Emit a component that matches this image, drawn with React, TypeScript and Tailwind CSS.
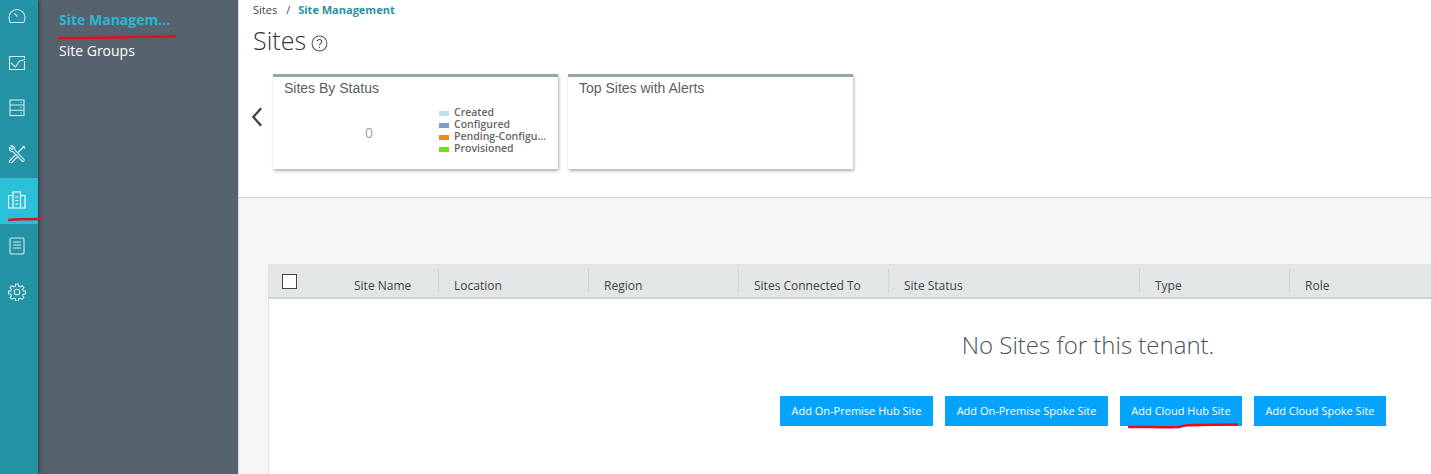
const railIcons = [
  // gauge
  <>
    <path d="M2.200 15.500C1.400 14 1 12.300 1 10.500a8 8 0 0 1 16 0c0 1.800-.4 3.500-1.200 5z" />
    <path d="M9.500 9.500 6.500 6.500" />
  </>,
  // chart in a box
  <>
    <path d="M16.500 5.500V3.500h-15v13h15V8" />
    <path d="M3 10l4.500 4 4-6 5.500-1.500" />
  </>,
  // server rack
  <>
    <rect x="2" y="1" width="14" height="15.500" />
    <path d="M2 6h14M2 11.200h14M12.500 3.500h1M12.500 8.600h1M12.500 13.800h1" />
  </>,
  // tools
  <>
    <path d="M3 .8 5.200 3.200 4 4.500 1.500 2.500C1 5 2.800 7 5 6.500l9 9.500c1.100 1.100 3-.4 1.900-1.700L6.800 4.800C7.300 2.600 5.500.4 3 .8z" />
    <path d="M16.500 1 9.800 7.500M7.500 10 1.800 15.500a1.400 1.400 0 0 0 2.100 2l5.300-5.500" />
    <path d="M14.500.8l2.700 2.700" />
  </>,
  // buildings
  <>
    <path d="M.5 4.500h4.500v12.500H.5zM5 17V1h7.500v16zM12.500 4.500H17V17h-4.500z" />
    <path d="M7.300 6h3M7.300 9.500h3M7.300 13h3" />
  </>,
  // document
  <>
    <rect x="2" y="1" width="14" height="16" rx="1.500" />
    <path d="M5 5h8M5 8h8M5 11h8" />
  </>,
  // gear
  <>
    <circle cx="9" cy="9" r="2.800" />
    <path d="M7.700 1h2.600l.4 2.300 1.400.6 1.900-1.300 1.900 1.900-1.300 1.900.6 1.400 2.300.4v2.600l-2.300.4-.6 1.400 1.300 1.900-1.900 1.900-1.900-1.300-1.400.6-.4 2.300H7.700l-.4-2.300-1.400-.6-1.900 1.300L2.100 14.600l1.300-1.900-.6-1.400-2.300-.4V8.300l2.300-.4.6-1.400-1.300-1.900L4 2.700l1.900 1.300 1.400-.6z" />
  </>,
];

const columns = [
  { label: "Site Name", width: "w-[170px]", pad: "pl-[85px]" },
  { label: "Location", width: "w-[150px]", pad: "pl-[15px]" },
  { label: "Region", width: "w-[150px]", pad: "pl-[15px]" },
  { label: "Sites Connected To", width: "w-[150px]", pad: "pl-[15px]" },
  { label: "Site Status", width: "w-[251px]", pad: "pl-[15px]" },
  { label: "Type", width: "w-[150px]", pad: "pl-[15px]" },
  { label: "Role", width: "flex-1", pad: "pl-[15px]" },
];

const legend = [
  { label: "Created", color: "bg-[#c0e0e4]" },
  { label: "Configured", color: "bg-[#749fd2]" },
  { label: "Pending-Configu...", color: "bg-[#f28c0c]" },
  { label: "Provisioned", color: "bg-[#6fe31d]" },
];

const buttons = [
  { label: "Add On-Premise Hub Site", width: "w-[153px]" },
  { label: "Add On-Premise Spoke Site", width: "w-[163px]" },
  { label: "Add Cloud Hub Site", width: "w-[122px]" },
  { label: "Add Cloud Spoke Site", width: "w-[132px]" },
];

function Scribble({ className, d, w, h }: { className: string; d: string; w: number; h: number }) {
  return (
    <svg className={`absolute z-20 pointer-events-none ${className}`} width={w} height={h} viewBox={`0 0 ${w} ${h}`} fill="none">
      <path d={d} stroke="#e3101c" strokeWidth="2.5" strokeLinecap="round" />
    </svg>
  );
}

function Card({ title, children }: { title: string; children?: React.ReactNode }) {
  return (
    <div className="w-[285px] h-[95px] bg-white border-t-[3px] border-[#95a6a9] shadow-[1px_2px_3px_rgba(0,0,0,0.3)]">
      <div className="pl-[11px] pt-[2px] text-[14px] leading-[18px] text-[#5a5f63] font-['Liberation_Sans',sans-serif]">
        {title}
      </div>
      {children}
    </div>
  );
}

export default function App() {
  return (
    <div className="relative flex h-[474px] w-[1431px] overflow-hidden bg-white font-['Open_Sans',sans-serif]">
      {/* Icon rail */}
      <div className="w-[38px] shrink-0 bg-[#2393a4] shadow-[1px_0_4px_rgba(0,0,0,0.45)] z-10">
        <div className="-mt-[6px] flex flex-col">
          {railIcons.map((icon, i) => (
            <div
              key={i}
              className={`flex h-[46px] items-center justify-center pr-[4px] pb-[3px] ${i === 4 ? "bg-[#29c0d8]" : ""}`}
            >
              <svg width="18" height="18" viewBox="0 0 18 18" fill="none" stroke={i === 4 ? "#ffffff" : "#d3ebef"} strokeWidth="1.100">
                {icon}
              </svg>
            </div>
          ))}
        </div>
      </div>

      {/* Secondary nav */}
      <div className="w-[200px] shrink-0 bg-[#56626e] pl-[21px] pt-[10px] text-[14px] leading-[20px]">
        <div className="font-bold text-[#2bb8d2]">Site Managem...</div>
        <div className="mt-[11px] text-white">Site Groups</div>
      </div>

      {/* Main */}
      <div className="flex min-w-0 flex-1 flex-col border-l border-[#dcdcdc]">
        <div className="h-[198px] shrink-0 border-b border-[#d2d2d2] bg-white pl-[14px]">
          <div className="flex pt-[2px] text-[11px] leading-[16px] text-[#444]">
            <span>Sites</span>
            <span className="ml-[9px]">/</span>
            <span className="ml-[8px] font-bold text-[#2d8f9f]">Site Management</span>
          </div>
          <div className="mt-[4px] flex items-center">
            <h1 className="text-[25px] leading-[36px] font-light text-[#333]">Sites</h1>
            <svg className="ml-[5px] mt-[7px]" width="17" height="17" viewBox="0 0 16 16" fill="none" stroke="#555" strokeWidth="1">
              <circle cx="8" cy="8" r="7" />
              <path d="M5.800 6.200C5.800 5 6.800 4.200 8 4.200s2.200.8 2.200 2c0 1.600-2.200 1.600-2.200 3.400" />
              <path d="M8 11v1.200" />
            </svg>
          </div>
          <div className="mt-[16px] flex">
            <div className="flex h-[95px] w-[20px] items-center">
              <svg className="-mt-[10px] -ml-[2px]" width="12" height="22" viewBox="0 0 13 22" fill="none" stroke="#3c4248" strokeWidth="2.500">
                <path d="M11 1.500 2.500 11l8.500 9.500" />
              </svg>
            </div>
            <div className="flex gap-[10px]">
              <Card title="Sites By Status">
                <div className="flex">
                  <div className="w-[166px] pt-[26px] pl-[92px] text-[14px] leading-[20px] text-[#9aa5a8]">0</div>
                  <div className="mt-[10px]">
                    {legend.map((l) => (
                      <div key={l.label} className="flex h-[12px] items-center whitespace-nowrap text-[10.5px] font-semibold text-[#666]">
                        <span className={`mr-[5px] h-[5px] w-[10px] ${l.color}`} />
                        {l.label}
                      </div>
                    ))}
                  </div>
                </div>
              </Card>
              <Card title="Top Sites with Alerts" />
            </div>
          </div>
        </div>

        <div className="flex-1 bg-[#f5f5f5] pl-[29px] pt-[66px]">
          <div className="flex h-full flex-col border-l border-t border-[#dfe3e3] bg-white">
            <div className="flex h-[34px] shrink-0 border-b-2 border-[#cfd3d3] bg-[#e2e6e6] text-[12px] text-[#444]">
              {columns.map((c, i) => (
                <div key={c.label} className={`relative h-full ${c.width} ${c.pad}`}>
                  {i === 0 && (
                    <span className="absolute left-[13px] top-[9px] h-[15px] w-[15px] border border-[#444] bg-white" />
                  )}
                  <span className="block pt-[12px] leading-[18px]">{c.label}</span>
                  {i < columns.length - 1 && (
                    <span className="absolute right-0 top-[4px] h-[23px] border-r border-dotted border-[#c4c8c8]" />
                  )}
                </div>
              ))}
            </div>
            <div className="flex flex-1 flex-col items-center pl-[450px]">
              <p className="mt-[28px] ml-[26px] text-[24px] leading-[36px] font-light text-[#4c5358] whitespace-nowrap">
                No Sites for this tenant.
              </p>
              <div className="mt-[33px] flex gap-[12px] self-start ml-[61px] whitespace-nowrap">
                {buttons.map((b) => (
                  <button key={b.label} className={`h-[30px] ${b.width} bg-[#05a3fb] text-[11px] text-white`}>
                    {b.label}
                  </button>
                ))}
              </div>
            </div>
          </div>
        </div>
      </div>

      {/* Red pen marks drawn over the screenshot */}
      <Scribble className="left-[58px] top-[34px]" w={120} h={6} d="M1 4C30 4 60 3.500 85 2.500c10 0 15 1 32-.5" />
      <Scribble className="left-[8px] top-[216px]" w={34} h={6} d="M1 4C10 3 20 3 32 3" />
      <Scribble className="left-[1128px] top-[421px]" w={112} h={8} d="M1 6c18 0 36 .5 50 0 6-2.500 10-2 58-2.500" />
    </div>
  );
}
